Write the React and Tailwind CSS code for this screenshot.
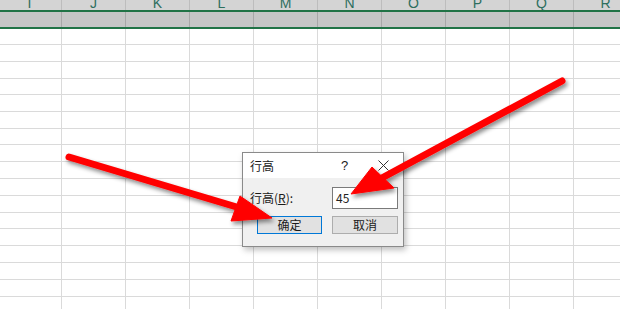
import React from 'react';

const COLS = ['I', 'J', 'K', 'L', 'M', 'N', 'O', 'P', 'Q', 'R'];
// row heights incl. 1px bottom line, measured from the sheet
const ROWS = [16, 17, 17, 16, 17, 17, 16, 17, 17, 17, 17, 16, 17, 17, 17, 17, 17];

const font = { fontFamily: '"Microsoft YaHei", "Noto Sans CJK SC", "Liberation Sans", sans-serif' };

const Arrows = () => (
  <svg className="absolute inset-0 pointer-events-none" width="620" height="309" viewBox="0 0 620 309">
    <defs>
      <filter id="sh" x="-20%" y="-20%" width="140%" height="140%">
        <feDropShadow dx="2" dy="3" stdDeviation="2" floodColor="#000" floodOpacity="0.45" />
      </filter>
    </defs>
    <g filter="url(#sh)" fill="#ff0000" stroke="#ff0000">
      {/* left arrow */}
      <line x1="69" y1="157" x2="240" y2="208" strokeWidth="7" strokeLinecap="round" />
      <polygon points="240,196 231,221 272,218" strokeWidth="1" strokeLinejoin="round" />
      {/* right arrow */}
      <line x1="562" y1="81" x2="380" y2="179" strokeWidth="7" strokeLinecap="round" />
      <polygon points="372,167 394,188 351,194" strokeWidth="1" strokeLinejoin="round" />
    </g>
  </svg>
);

const Dialog = () => (
  <div
    className="absolute left-[242px] top-[152px] w-[162px] h-[95px] border border-[#8a8a8a] bg-[#f0f0f0] flex flex-col shadow-[2px_3px_6px_rgba(0,0,0,0.25)]"
    style={font}
  >
    {/* Title bar */}
    <div className="h-[25px] bg-white flex items-center text-[12px] text-[#1a1a1a]">
      <span className="pl-[7px] flex-1">行高</span>
      <span className="w-[10px] text-[13px] mr-[27px]" style={{ fontFamily: '"Liberation Sans", sans-serif' }}>?</span>
      <svg width="11" height="11" viewBox="0 0 11 11" className="mr-[14px]">
        <path d="M0.5 0.5 L10.5 10.5 M10.5 0.5 L0.5 10.5" stroke="#333" strokeWidth="1" />
      </svg>
    </div>

    {/* Body */}
    <div className="flex-1 flex flex-col pt-[9px] pl-[7px]">
      <div className="flex items-center h-[22px]">
        <span className="w-[82px] text-[12px] text-[#1a1a1a]">
          行高(<span className="underline">R</span>):
        </span>
        <div className="w-[66px] h-[22px] bg-white border border-[#7a7a7a] flex items-center pl-[3px] text-[12px] text-[#222]">
          45
        </div>
      </div>
      <div className="flex items-center mt-[7px]">
        <button className="ml-[7px] w-[65px] h-[18px] bg-[#e1e1e1] border border-[#0078d7] text-[12px] text-[#1a1a1a] flex items-center justify-center leading-none">
          确定
        </button>
        <button className="ml-[10px] w-[66px] h-[18px] bg-[#e1e1e1] border border-[#adadad] text-[12px] text-[#1a1a1a] flex items-center justify-center leading-none">
          取消
        </button>
      </div>
    </div>
  </div>
);

export default function App() {
  return (
    <div className="relative w-[620px] h-[309px] overflow-hidden bg-white">
      {/* Column header, cut off at top */}
      <div className="flex h-[10px] bg-[#d4d4d4] -ml-[2px] overflow-hidden">
        {COLS.map((c) => (
          <div key={c} className="w-[64px] shrink-0 border-r border-[#bdbdbd] flex justify-center">
            <span
              className="block -mt-[6px] leading-[18px] text-[14px] text-[#2e6f5e]"
              style={{ fontFamily: '"Liberation Sans", sans-serif' }}
            >
              {c}
            </span>
          </div>
        ))}
      </div>
      <div className="h-[2px] bg-[#217346]" />

      {/* Selected row */}
      <div className="flex h-[15px] bg-[#c6c6c6] -ml-[2px]">
        {COLS.map((c) => (
          <div key={c} className="w-[64px] shrink-0 border-r border-[#a8a8a8]" />
        ))}
      </div>
      <div className="h-[2px] bg-[#217346]" />

      {/* Cells */}
      <div className="flex flex-col">
        {ROWS.map((h, i) => (
          <div key={i} className="flex -ml-[2px]" style={{ height: h }}>
            {COLS.map((c) => (
              <div key={c} className="w-[64px] shrink-0 border-r border-b border-[#dadada]" />
            ))}
          </div>
        ))}
      </div>

      <Dialog />
      <Arrows />
    </div>
  );
}
